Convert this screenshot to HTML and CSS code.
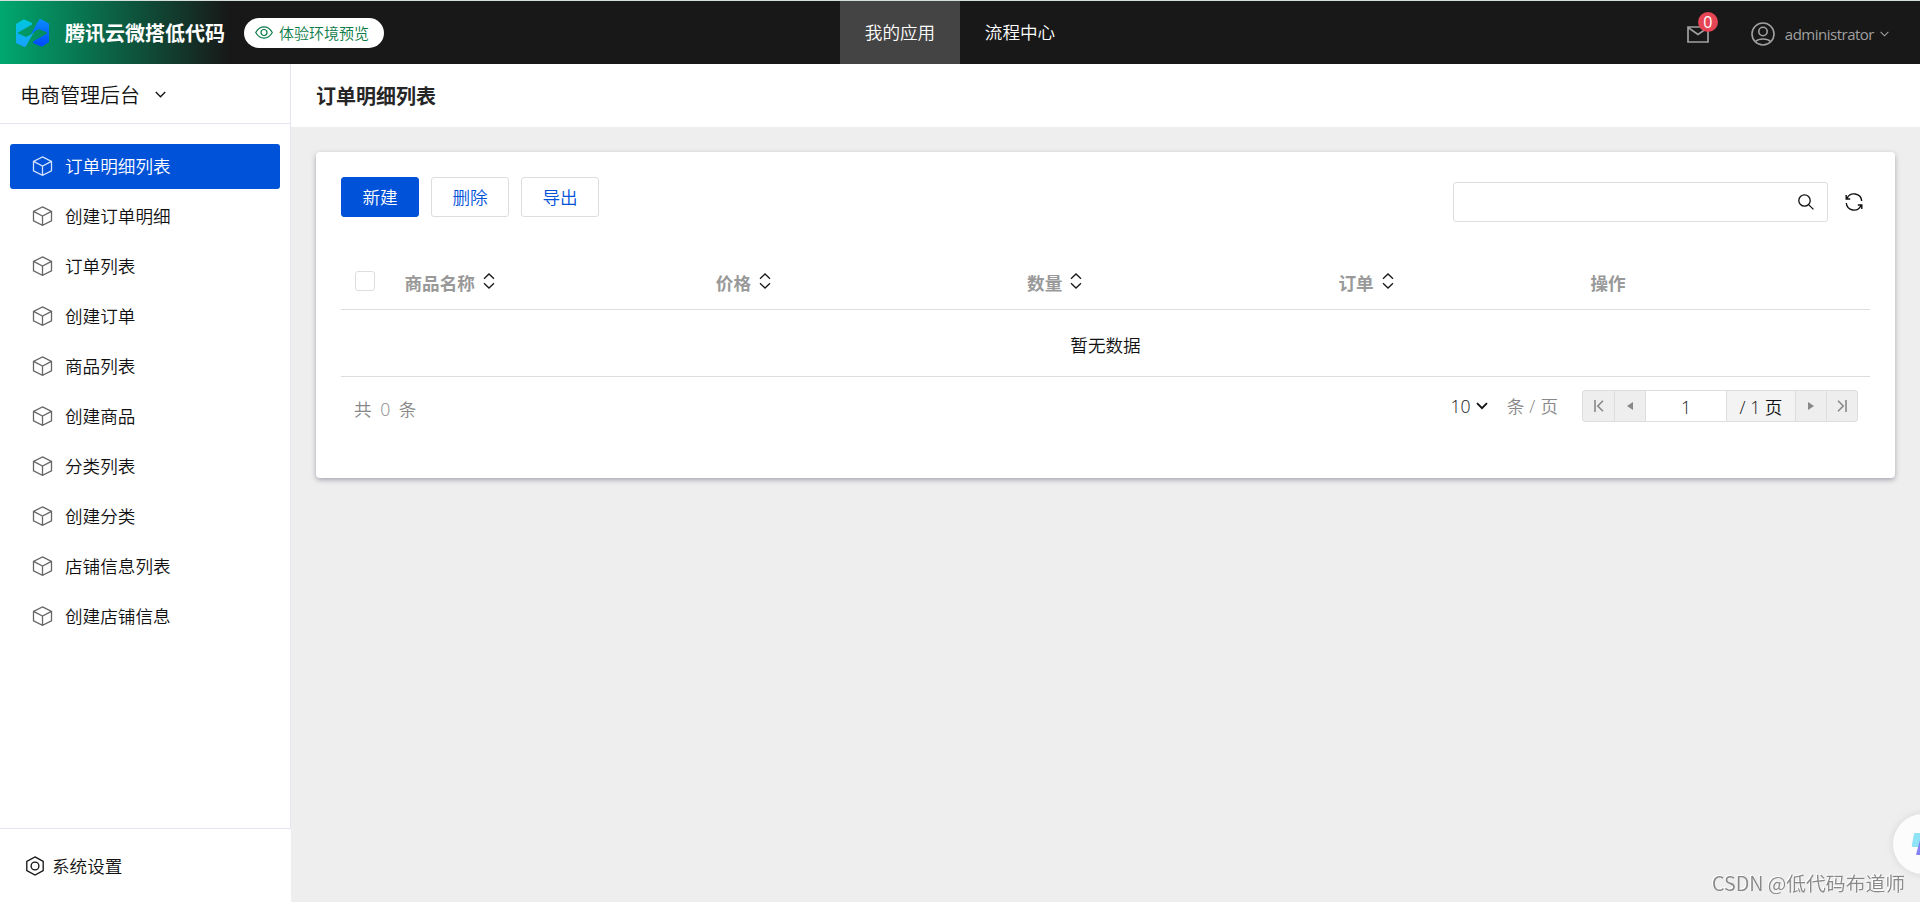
FILE: index.html
```html
<!DOCTYPE html>
<html lang="zh-CN">
<head>
    <meta charset="UTF-8">
    <title>订单明细列表</title>
    <link rel="stylesheet" href="styles.css">
</head>
<body>
    <svg class="defs" width="0" height="0">
        <symbol id="i-cube" viewBox="0 0 20 20">
            <path d="M10 .9l9 4.400v9.600l-9 4.400-9-4.400V5.300zM1 5.300l9 4.700 9-4.700M10 10v9.300" fill="none" stroke="currentColor" stroke-width="1.300"/>
        </symbol>
        <symbol id="i-down" viewBox="0 0 10 6">
            <path d="M.7.7L5 5 9.300.7" fill="none" stroke="currentColor" stroke-width="1.200"/>
        </symbol>
        <symbol id="i-sort" viewBox="0 0 12 16">
            <path d="M1 5.700L6 1l5 4.700M1 10.300L6 15l5-4.700" fill="none" stroke="currentColor" stroke-width="1.300"/>
        </symbol>
    </svg>
    <header class="header">
        <div class="brand">
            <svg class="logo" width="34" height="28" viewBox="0 0 34 28">
                <defs>
                    <linearGradient id="lg1" x1="0" y1="0" x2="0" y2="1"><stop offset="0" stop-color="#00c8dc"/><stop offset="1" stop-color="#18a0ff"/></linearGradient>
                    <linearGradient id="lg2" x1="0" y1="0" x2="0" y2="1"><stop offset="0" stop-color="#0a8cff"/><stop offset="1" stop-color="#0048ff"/></linearGradient>
                </defs>
                <path d="M0 5l6.500-4q1.500-.9 3 0L16 4v1.500L2 13.500v1l8 3.500q4.500-1.500 8.500-6L10 27q-1 1.500-2.500.6L0 24z" fill="url(#lg1)"/>
                <path d="M33 23l-6 4q-1.500.9-3 0L17 24v-1.500L31 14.500v-1L23 10q-4.500 1.500-8.500 6L23 1q1-1.500 2.500-.6L33 4.500z" fill="url(#lg2)"/>
            </svg>
            <span class="brand-name">腾讯云微搭低代码</span>
            <span class="env">
                <svg width="18" height="13" viewBox="0 0 18 13" fill="none" stroke="currentColor" stroke-width="1.200"><path d="M.7 6.500Q4 .9 9 .9t8.300 5.600Q14 12.100 9 12.100T.7 6.500z"/><circle cx="9" cy="6.500" r="3"/></svg>
                体验环境预览
            </span>
        </div>
        <nav class="nav">
            <a href="#" class="active">我的应用</a>
            <a href="#">流程中心</a>
        </nav>
        <div class="user">
            <span class="mail">
                <svg width="22" height="17" viewBox="0 0 22 17" fill="none" stroke="currentColor" stroke-width="1.700"><path d="M1 1h20v15H1zM1 1.500l10 7 10-7"/></svg>
                <i class="badge">0</i>
            </span>
            <svg class="avatar" width="24" height="24" viewBox="0 0 24 24" fill="none" stroke="currentColor" stroke-width="1.600"><circle cx="12" cy="12" r="11"/><circle cx="12" cy="9.500" r="4.200"/><path d="M4.500 19.500Q7 17 12 17t7.500 2.500"/></svg>
            <span class="user-name">administrator</span>
            <svg class="user-arrow" width="9" height="6"><use href="#i-down"/></svg>
        </div>
    </header>
    <div class="layout">
        <aside class="sidebar">
            <div class="app-name">电商管理后台<svg width="11" height="7"><use href="#i-down"/></svg></div>
            <ul class="menu">
                <li class="active"><svg><use href="#i-cube"/></svg>订单明细列表</li>
                <li><svg><use href="#i-cube"/></svg>创建订单明细</li>
                <li><svg><use href="#i-cube"/></svg>订单列表</li>
                <li><svg><use href="#i-cube"/></svg>创建订单</li>
                <li><svg><use href="#i-cube"/></svg>商品列表</li>
                <li><svg><use href="#i-cube"/></svg>创建商品</li>
                <li><svg><use href="#i-cube"/></svg>分类列表</li>
                <li><svg><use href="#i-cube"/></svg>创建分类</li>
                <li><svg><use href="#i-cube"/></svg>店铺信息列表</li>
                <li><svg><use href="#i-cube"/></svg>创建店铺信息</li>
            </ul>
            <div class="setting">
                <svg width="18" height="20" viewBox="0 0 18 20" fill="none" stroke="currentColor" stroke-width="1.300"><path d="M9 .9l8.200 4.500v9.200L9 19.100.8 14.600V5.400z"/><circle cx="9" cy="10" r="3.900"/></svg>
                系统设置
            </div>
        </aside>
        <main class="main">
            <h1 class="title">订单明细列表</h1>
            <section class="card">
                <div class="toolbar">
                    <button class="btn btn-primary">新建</button>
                    <button class="btn">删除</button>
                    <button class="btn">导出</button>
                    <div class="search">
                        <svg width="16" height="16" viewBox="0 0 16 16" fill="none" stroke="currentColor" stroke-width="1.300"><circle cx="6.500" cy="6.500" r="5.700"/><path d="M10.600 10.600l4.800 4.800"/></svg>
                    </div>
                    <svg class="refresh" width="18" height="18" viewBox="0 0 18 18" fill="none" stroke="currentColor" stroke-width="1.400"><path d="M2 5.500A7.700 7.700 0 0 1 16.700 8M1.300 10A7.700 7.700 0 0 0 16 12.500M1.200 2v4h4M16.800 16v-4h-4"/></svg>
                </div>
                <table class="table">
                    <colgroup>
                        <col class="c-check"><col class="c-data"><col class="c-data"><col class="c-data"><col class="c-order"><col>
                    </colgroup>
                    <thead>
                        <tr>
                            <th><span class="checkbox"></span></th>
                            <th>商品名称<svg><use href="#i-sort"/></svg></th>
                            <th>价格<svg><use href="#i-sort"/></svg></th>
                            <th>数量<svg><use href="#i-sort"/></svg></th>
                            <th>订单<svg><use href="#i-sort"/></svg></th>
                            <th>操作</th>
                        </tr>
                    </thead>
                    <tbody>
                        <tr><td colspan="6">暂无数据</td></tr>
                    </tbody>
                </table>
                <div class="footer">
                    <span class="total">共 0 条</span>
                    <span class="size">10<svg width="12" height="8" viewBox="0 0 12 8"><path d="M1 1.200l5 5 5-5" fill="none" stroke="currentColor" stroke-width="1.800"/></svg></span>
                    <span class="unit">条 / 页</span>
                    <div class="pager">
                        <span class="pg"><svg width="10" height="12" viewBox="0 0 10 12"><path d="M1 0v12M9 .8L3.800 6 9 11.200" fill="none" stroke="currentColor" stroke-width="1.600"/></svg></span>
                        <span class="pg"><svg width="6" height="8" viewBox="0 0 6 8"><path d="M6 0v8L0 4z" fill="currentColor"/></svg></span>
                        <span class="pg-now">1</span>
                        <span class="pg-all">/ 1 页</span>
                        <span class="pg"><svg width="6" height="8" viewBox="0 0 6 8"><path d="M0 0v8l6-4z" fill="currentColor"/></svg></span>
                        <span class="pg"><svg width="10" height="12" viewBox="0 0 10 12"><path d="M9 0v12M1 .8L6.200 6 1 11.200" fill="none" stroke="currentColor" stroke-width="1.600"/></svg></span>
                    </div>
                </div>
            </section>
        </main>
    </div>
    <div class="float-btn">
        <svg width="18" height="26" viewBox="0 0 18 26"><path d="M4 1h14v14H2q-1.500 0-1.200-1.500L3 2q.2-1 1-1z" fill="#8fe3f7"/><path d="M9 8h9v15H6q-1 0-.8-1z" fill="#8482f5"/></svg>
    </div>
    <div class="watermark">CSDN @低代码布道师</div>
</body>
</html>
```
FILE: styles.css
```css
* {
    box-sizing: border-box;
}

body {
    margin: 0;
    height: 902px;
    overflow: hidden;
    display: flex;
    flex-direction: column;
    border-top: 1px solid #d5dfdb;
    font: 350 17.6px/26px "Noto Sans CJK SC", sans-serif;
    color: #111;
    background-color: #eee;
}

.defs {
    position: absolute;
}

svg {
    flex: none;
}

/* header */
.header {
    flex: none;
    display: grid;
    grid-template-columns: 840px 1fr auto;
    height: 63px;
    color: #fff;
    background: linear-gradient(90deg, #00a870 0, #181818 230px);
}

.brand {
    display: flex;
    align-items: center;
    padding-left: 16px;
}

.brand-name {
    margin-left: 15px;
    font-size: 20px;
    font-weight: bold;
}

.env {
    display: flex;
    align-items: center;
    gap: 6px;
    width: 140px;
    height: 30px;
    margin: 0 0 0 19px;
    padding-left: 11px;
    border-radius: 15px;
    font-size: 15px;
    color: #0c7c48;
    background-color: #fff;
}

.nav {
    display: flex;
}

.nav a {
    width: 120px;
    line-height: 62px;
    text-align: center;
    color: #fff;
    text-decoration: none;
}

.nav .active {
    background-color: #444;
}

.user {
    display: flex;
    align-items: center;
    padding: 3px 31px 0 0;
    color: #a0a0a0;
}

.mail {
    position: relative;
    height: 17px;
    margin-right: 42px;
}

.mail svg {
    display: block;
}

.badge {
    position: absolute;
    top: -14px;
    right: -9px;
    width: 20px;
    height: 20px;
    border-radius: 50%;
    font: 16px/20px "Open Sans", sans-serif;
    text-align: center;
    color: #fff;
    background-color: #e54555;
}

.user-name {
    margin: 0 6px 0 10px;
    font: 15px/20px "Open Sans", sans-serif;
    letter-spacing: -0.5px;
}

/* sidebar */
.layout {
    flex: 1;
    display: flex;
    min-height: 0;
}

.sidebar {
    display: flex;
    flex-direction: column;
    width: 291px;
    background-color: #fff;
}

.app-name {
    display: flex;
    align-items: center;
    gap: 15px;
    height: 60px;
    padding: 2px 0 0 20px;
    border-right: 1px solid #e3e6ef;
    border-bottom: 1px solid #e3e6ef;
    font-size: 20px;
}

.menu {
    flex: 1;
    margin: 0;
    padding: 20px 10px;
    border-right: 1px solid #e3e6ef;
    list-style: none;
}

.menu li {
    display: flex;
    align-items: center;
    height: 45px;
    margin-bottom: 5px;
    padding: 0 0 1px 22px;
    border-radius: 3px;
}

.menu svg {
    width: 21px;
    height: 20px;
    margin-right: 12px;
    color: #666;
}

.menu .active {
    color: #fff;
    background-color: #0052d9;
}

.menu .active svg {
    color: #d4e3fc;
}

.setting {
    display: flex;
    align-items: center;
    gap: 8px;
    height: 74px;
    padding: 1px 0 0 26px;
    border-top: 1px solid #e3e6ef;
}

/* main */
.main {
    flex: 1;
}

.title {
    margin: 0;
    padding-left: 25px;
    font-size: 20px;
    line-height: 63px;
    color: #262626;
    background-color: #fff;
}

.card {
    height: 326px;
    margin: 25px 25px 0;
    padding: 25px;
    border-radius: 4px;
    background-color: #fff;
    box-shadow: 0 2px 5px rgba(30,35,60,0.35);
}

.toolbar {
    display: flex;
    gap: 12px;
    height: 74px;
}

.btn {
    width: 78px;
    height: 40px;
    padding: 0;
    border: 1px solid #ddd;
    border-radius: 3px;
    font: inherit;
    color: #0052d9;
    background-color: #fff;
}

.btn-primary {
    border-color: #0052d9;
    color: #fff;
    background-color: #0052d9;
}

.search {
    display: flex;
    align-items: center;
    justify-content: flex-end;
    width: 375px;
    height: 40px;
    margin: 5px 5px 0 auto;
    padding-right: 13px;
    border: 1px solid #ddd;
    border-radius: 3px;
}

.refresh {
    margin: 16px 7px 0 0;
}

.table {
    width: 100%;
    table-layout: fixed;
    border-collapse: collapse;
}

.c-check {
    width: 51px;
}

.c-data {
    width: 311.3px;
}

.c-order {
    width: 252px;
}

.table th {
    height: 58px;
    padding: 6px 0 0 12.5px;
    border-bottom: 1px solid #ddd;
    font-weight: bold;
    text-align: left;
    color: #999;
}

.table th svg {
    width: 12px;
    height: 16px;
    margin-left: 8px;
    vertical-align: 0.5px;
    color: #181818;
}

.checkbox {
    display: block;
    width: 20px;
    height: 20px;
    margin: -3px 0 0 1px;
    border: 1px solid #ddd;
    border-radius: 3px;
}

.table td {
    height: 67px;
    padding: 5px 0 0;
    border-bottom: 1px solid #ddd;
    text-align: center;
}

.footer {
    display: flex;
    align-items: center;
    height: 58px;
    padding: 0 12px 0 13px;
    font-family: "Open Sans", "Noto Sans CJK SC", sans-serif;
}

.total {
    padding-top: 7px;
    word-spacing: 4px;
    color: #888;
}

.size {
    display: flex;
    align-items: center;
    gap: 5px;
    margin-left: auto;
}

.unit {
    margin: 0 24px 0 19px;
    word-spacing: 0.5px;
    color: #888;
}

.pager {
    display: flex;
    height: 32px;
    border: 1px solid #ddd;
    border-radius: 3px;
    line-height: 32px;
    text-align: center;
    background-color: #eee;
}

.pager span + span {
    border-left: 1px solid #ddd;
}

.pg {
    display: flex;
    align-items: center;
    justify-content: center;
    width: 31px;
    color: #888;
}

.pg-now {
    width: 81px;
    background-color: #fff;
}

.pg-all {
    width: 69px;
    background-color: #f3f3f3;
}

/* overlays */
.float-btn {
    position: fixed;
    right: -33px;
    top: 814px;
    width: 60px;
    height: 60px;
    padding: 18px;
    border-radius: 50%;
    background-color: #fcfcfc;
    box-shadow: 0 0 8px rgba(0,0,0,0.1);
}

.watermark {
    position: fixed;
    right: 15px;
    bottom: 6px;
    font-size: 19.8px;
    color: #888;
    text-shadow: -1px -1px #fff;
}
```
